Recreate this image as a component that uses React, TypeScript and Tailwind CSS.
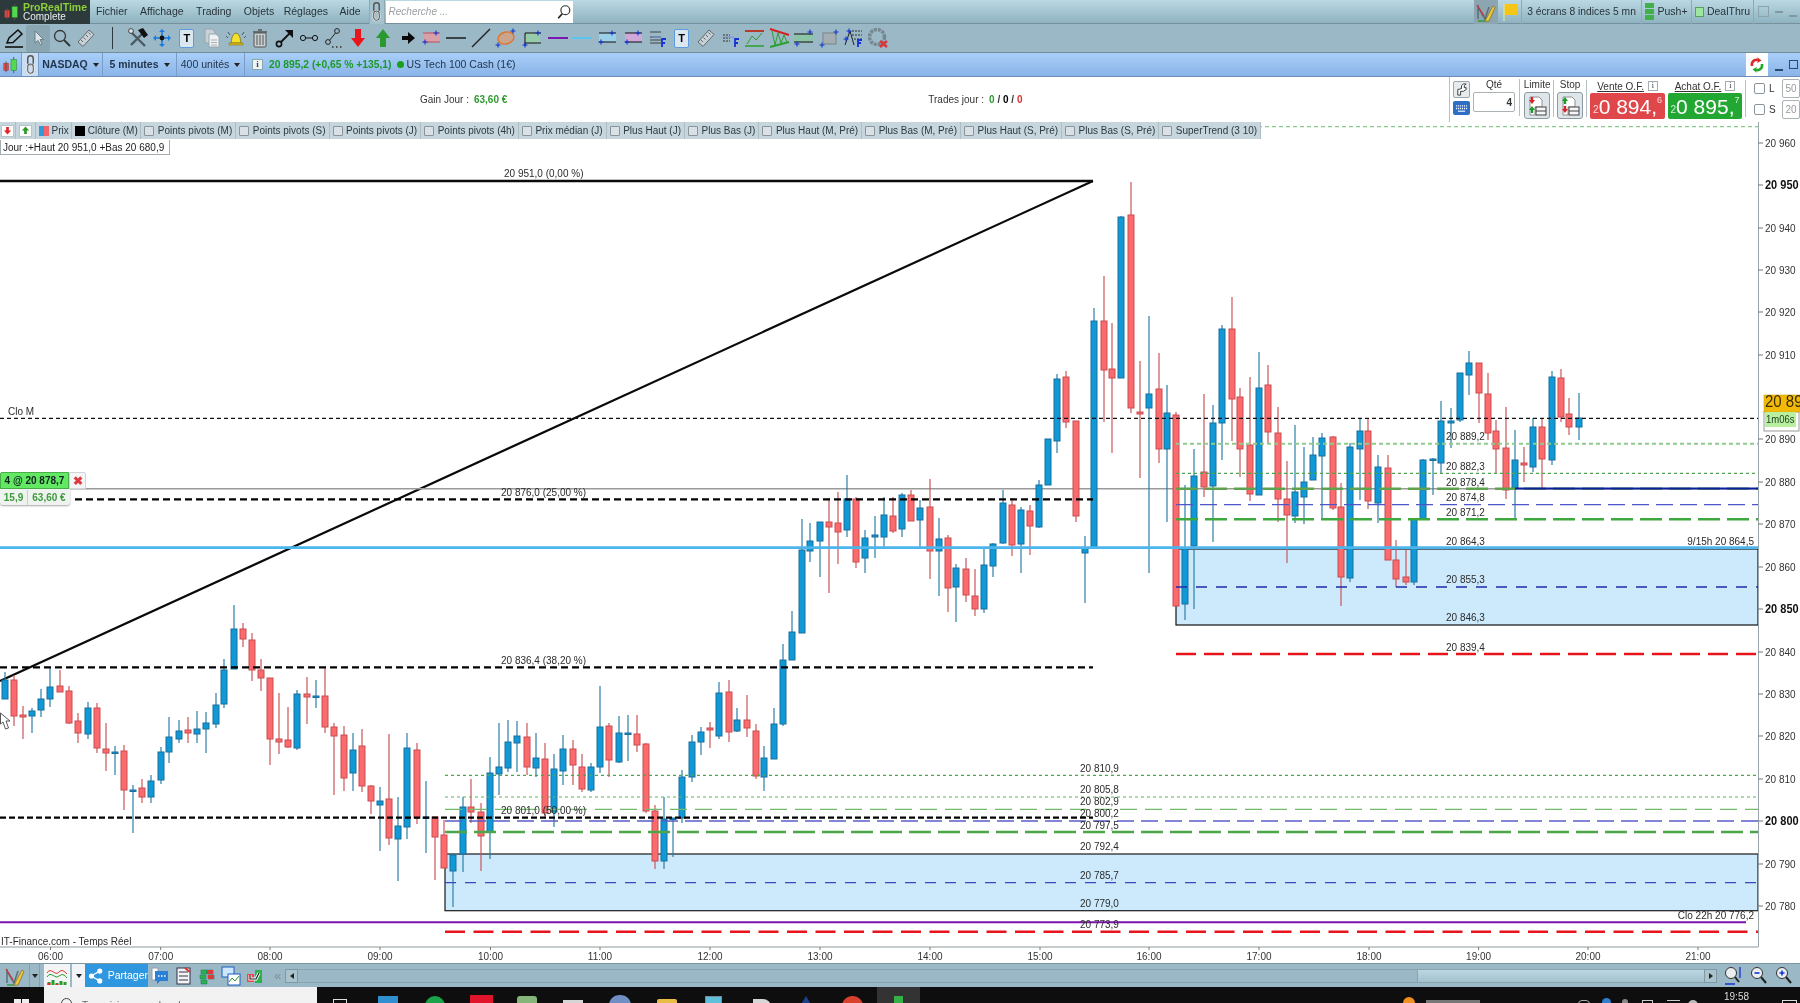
import React from "react";

type C = [number, number, number, number, number, "b" | "r"];
const candles: C[] = [
[5,672,699,680,699,"b"],[14,675,726,680,716,"r"],[23,706,739,715,717,"r"],[32,708,733,711,716,"b"],[41,689,717,699,710,"b"],[50,667,707,687,699,"b"],[60,670,692,686,692,"r"],[69,686,724,691,723,"r"],[78,713,743,721,733,"r"],[88,702,739,708,734,"b"],[97,703,753,708,748,"r"],[106,723,771,749,753,"r"],[115,746,775,752,753,"b"],[124,745,810,751,790,"r"],[133,785,833,790,791,"b"],[142,779,803,788,797,"r"],[151,775,803,781,797,"b"],[161,747,784,752,780,"b"],[169,717,763,737,752,"b"],[179,720,743,731,739,"b"],[188,717,743,730,733,"r"],[197,711,743,729,734,"b"],[206,712,753,723,729,"b"],[216,693,728,705,724,"b"],[224,659,708,670,704,"b"],[234,605,669,629,669,"b"],[243,623,647,629,639,"r"],[252,633,681,640,670,"r"],[261,659,691,670,678,"r"],[270,678,765,678,739,"r"],[279,693,754,739,742,"r"],[288,707,748,740,747,"r"],[297,690,750,694,748,"b"],[307,677,724,694,697,"r"],[316,680,708,696,697,"b"],[325,667,733,696,727,"r"],[334,723,795,727,736,"r"],[344,726,791,735,778,"r"],[353,733,791,750,773,"b"],[362,729,792,746,786,"r"],[371,785,814,786,801,"r"],[380,787,851,801,805,"b"],[389,734,845,799,838,"r"],[398,797,881,826,839,"b"],[407,733,839,748,827,"b"],[417,743,824,750,818,"r"],[426,781,853,817,818,"b"],[435,817,880,817,837,"r"],[444,820,868,835,868,"r"],[453,853,907,855,871,"b"],[463,797,872,807,854,"b"],[471,779,823,807,812,"r"],[481,803,871,812,836,"r"],[490,757,859,773,832,"b"],
[499,723,795,767,774,"b"],[508,720,772,742,768,"b"],[517,721,772,736,743,"b"],[527,723,775,737,767,"r"],[536,733,777,758,768,"b"],[545,743,817,759,813,"r"],[554,754,827,769,812,"b"],[563,735,785,749,771,"b"],[573,740,785,749,765,"r"],[582,754,792,767,789,"r"],[591,763,792,767,790,"b"],[600,686,773,727,767,"b"],[609,723,777,726,760,"r"],[619,716,763,733,762,"b"],[628,715,761,733,734,"b"],[637,715,752,734,745,"r"],[646,743,813,744,811,"r"],[655,805,869,811,861,"r"],[664,797,869,819,861,"b"],[673,818,857,818,819,"b"],[682,770,823,777,818,"b"],[692,735,782,742,777,"b"],[701,727,755,732,742,"b"],[710,722,748,728,730,"r"],[719,682,739,693,736,"b"],[729,680,742,692,732,"r"],[737,708,732,720,731,"b"],[747,695,737,720,728,"r"],[756,724,779,731,776,"r"],[764,746,791,758,777,"b"],[774,708,759,724,759,"b"],[783,644,726,660,724,"b"],[792,611,660,632,660,"b"],
[802,519,633,550,633,"b"],[810,523,562,541,551,"b"],[820,522,577,522,541,"b"],[829,498,593,522,527,"r"],[838,492,564,523,532,"r"],[847,475,537,499,530,"b"],[856,497,568,499,562,"r"],[865,530,573,538,558,"b"],[875,516,558,535,537,"b"],[884,497,547,515,537,"b"],[893,497,533,516,531,"r"],[902,493,537,495,529,"b"],[911,490,521,495,521,"r"],[920,500,549,508,520,"b"],[930,479,579,507,551,"r"],[939,518,596,539,551,"b"],[948,535,612,538,588,"r"],[956,564,622,568,587,"b"],[966,558,602,569,595,"r"],[975,569,616,596,609,"r"],[984,547,613,565,609,"b"],[993,543,577,544,566,"b"],[1003,490,544,503,543,"b"],[1012,498,556,505,545,"r"],[1021,507,573,510,544,"b"],[1030,505,555,511,526,"r"],[1039,480,528,485,527,"b"],
[1048,439,485,439,485,"b"],[1057,374,453,379,441,"b"],[1066,371,428,377,422,"r"],[1076,421,522,421,516,"r"],[1085,536,603,548,553,"b"],[1094,308,548,321,548,"b"],[1104,276,422,321,370,"r"],[1112,323,453,369,378,"r"],[1121,216,378,217,378,"b"],[1131,182,413,215,408,"r"],[1140,361,478,412,414,"r"],[1149,316,573,394,408,"b"],[1159,353,463,389,449,"r"],[1167,385,522,413,449,"b"],[1176,412,606,415,606,"r"],[1185,485,620,549,604,"b"],[1194,449,609,476,546,"b"],[1204,394,497,472,487,"r"],[1213,405,542,423,486,"b"],[1222,325,460,329,423,"b"],[1232,297,441,329,399,"r"],[1240,388,477,397,449,"r"],[1250,377,501,445,494,"r"],[1259,352,495,388,495,"b"],[1268,365,443,385,432,"r"],[1278,407,522,433,499,"r"],[1287,461,563,499,515,"r"],[1295,425,523,492,516,"b"],[1304,447,524,482,497,"b"],[1313,437,480,455,480,"b"],[1322,433,520,438,456,"b"],[1333,436,510,437,508,"r"],[1341,483,606,507,577,"r"],[1350,443,582,447,578,"b"],[1360,418,500,431,449,"b"],[1368,418,509,431,501,"r"],[1378,455,523,467,503,"b"],[1388,455,560,468,560,"r"],[1396,540,587,560,579,"r"],[1406,550,585,577,582,"r"],[1414,519,585,519,582,"b"],[1423,459,519,460,519,"b"],[1433,458,495,459,460,"b"],[1441,401,473,421,463,"b"],[1451,408,448,421,423,"b"],[1460,373,422,373,420,"b"],[1469,351,395,363,375,"b"],[1479,363,423,363,393,"r"],[1488,373,440,394,433,"r"],[1496,420,473,431,449,"r"],[1506,407,499,448,490,"r"],[1515,430,520,460,488,"b"],[1524,447,482,463,465,"r"],[1533,418,472,427,467,"b"],[1542,418,490,427,459,"r"],[1552,371,465,377,460,"b"],[1561,369,422,378,417,"r"],[1569,398,435,414,427,"r"],[1579,393,440,418,427,"b"],
];

const times: [string, number][] = [["06:00",50.5],["07:00",160.7],["08:00",270],["09:00",380],["10:00",490.5],["11:00",600],["12:00",710],["13:00",820],["14:00",930],["15:00",1040],["16:00",1149],["17:00",1259],["18:00",1369],["19:00",1478.6],["20:00",1588],["21:00",1698]];
const levels: [string, number, boolean][] = [["20 960",143,false],["20 950",185,true],["20 940",228,false],["20 930",270,false],["20 920",312,false],["20 910",355,false],["20 890",439,false],["20 880",482,false],["20 870",524,false],["20 860",567,false],["20 850",609,true],["20 840",652,false],["20 830",694,false],["20 820",736,false],["20 810",779,false],["20 800",821,true],["20 790",864,false],["20 780",906,false]];
const rightLabels: [string, number][] = [["20 889,2",436],["20 882,3",466],["20 878,4",482],["20 874,8",497],["20 871,2",512],["20 864,3",541],["20 855,3",579],["20 846,3",617],["20 839,4",647]];
const leftLabels: [string, number][] = [["20 810,9",768],["20 805,8",789],["20 802,9",801],["20 800,2",813],["20 797,5",825],["20 792,4",846],["20 785,7",875],["20 779,0",903],["20 773,9",924]];
const fibLabels: [string, number, number][] = [["20 951,0 (0,00 %)",504,173],["20 876,0 (25,00 %)",501,492],["20 836,4 (38,20 %)",501,660],["20 801,0 (50,00 %)",501,810]];
const hLines: [number, number, number, string, number, string][] = [
  [1176,1758,443.7,"#8fcc8b",2,"4 3"],[1176,1758,473.3,"#4da54d",1.2,"3 3"],[1176,1758,488.7,"#5ea24f",2.5,"22 7"],[1176,1758,504.7,"#4f55c8",1.3,"17 7"],[1176,1758,519.3,"#3fa83f",2.5,"22 7"],[1176,1758,654,"#e8141c",2.5,"20 8"],[1176,1758,587,"#1c2ca8",1.3,"11 9"],
  [445,1758,775.3,"#4da54d",1.2,"3 3"],[445,1758,797,"#5db55a",1.2,"3 3"],[445,1758,809.3,"#72bb6a",1.2,"17 8"],[445,1758,821,"#5a5ec8",1.4,"17 7"],[445,1758,832,"#4ca648",2.5,"22 7"],[445,1758,882.7,"#3a47bd",1.2,"11 9"],
  [445,1758,931.7,"#e8141c",2.5,"20 8.5"],[1258,1758,126.7,"#88c888",1.2,"4 3"],
  [75,1093,499.3,"#000",2.2,"7 4"],[0,1093,667.3,"#000",2.2,"7 4"],[0,1093,817.7,"#000",2.2,"6 3"],[0,1758,418.3,"#111",1.2,"4 3"],
];

function Lbl({ x, y, t, a, b, f, c }: { x: number; y: number; t: string; a?: "end" | "middle"; b?: boolean; f?: number; c?: string }) {
  return (
    <text transform={`translate(${x} ${y + 3.6}) scale(1 1.14)`} fontSize={f ?? 10} textAnchor={a} fontWeight={b ? 700 : 400} fill={c ?? "#2b2b2b"}>{t}</text>
  );
}

function Chart() {
  return (
    <svg viewBox="0 122 1800 841" width={1800} height={841} className="block">
      <rect x={445} y={854} width={1313} height={56.7} fill="#cdeafd" stroke="#1a1a1a" strokeWidth={1.2} />
      <rect x={1176} y={549} width={582} height={76} fill="#cdeafd" stroke="#111" strokeWidth={1.2} />
      <path d="M1093 181L0 681" stroke="#0a0a0a" strokeWidth={2.2} fill="none" />
      <path d="M0 181H1093" stroke="#0a0a0a" strokeWidth={2.4} />
      <path d="M0 488.7H1758" stroke="#9a9a9a" strokeWidth={1.5} />
      {candles.map(([x, wt, wb, bt, bb, k]) => (
        <g key={x}>
          <path d={`M${x} ${wt}V${wb}`} stroke={k === "b" ? "#2d7fa8" : "#c9565a"} strokeWidth={1.2} />
          <rect x={x - 3} y={bt} width={6} height={Math.max(bb - bt, 1.5)} fill={k === "b" ? "#0f99d6" : "#fb6b6e"} stroke={k === "b" ? "#1b6f9c" : "#c84c50"} strokeWidth={1} />
        </g>
      ))}
      <path d="M0 547.7H1758" stroke="#4cb5ec" strokeWidth={2.8} />
      {hLines.map(([x1, x2, y, c, w, d]) => (
        <path key={`${x1}-${y}`} d={`M${x1} ${y}H${x2}`} stroke={c} strokeWidth={w} strokeDasharray={d} />
      ))}
      <path d="M1515 488.5H1758" stroke="#0d1fa0" strokeWidth={2.2} />
      <path d="M0 922.3H1746" stroke="#7e12ac" strokeWidth={2} />
      <path d="M0.5 713L0.5 724L3 722L5.5 729L8.5 728L6 721L10 721Z" fill="#fff" stroke="#444" strokeWidth={0.9} />

      {fibLabels.map(([t, x, y]) => <Lbl key={t} x={x} y={y} t={t} />)}
      {rightLabels.map(([t, y]) => <Lbl key={t} x={1446} y={y} t={t} />)}
      {leftLabels.map(([t, y]) => <Lbl key={t} x={1080} y={y} t={t} />)}
      <Lbl x={1754} y={541} a="end" t="9/15h 20 864,5" />
      <Lbl x={1754} y={915} a="end" t="Clo 22h 20 776,2" />
      <Lbl x={8} y={411} t="Clo M" />
      <Lbl x={1} y={941} t="IT-Finance.com - Temps Réel" />

      <path d="M1758.5 122V947" stroke="#9aa5ab" strokeWidth={1} />
      {levels.map(([t, y, b]) => (
        <g key={t}>
          <path d={`M1758 ${y}H1763`} stroke="#777" strokeWidth={1} />
          <Lbl x={1765} y={y} t={t} b={b} f={b ? 11 : 10} c={b ? "#111" : "#333"} />
        </g>
      ))}
      <rect x={1764} y={412} width={35} height={19} fill="#fff" stroke="#999" />
      <rect x={1764} y={395} width={36} height={17} fill="#f2b90a" stroke="#c9a010" strokeWidth={0.6} />
      <rect x={1765} y={412} width={31} height={15} fill="#b8f0a0" />
      <Lbl x={1765} y={403} t="20 89" f={15} c="#3a2f00" />
      <Lbl x={1766} y={419} t="1m06s" f={9.5} c="#1f3a1f" />

      <path d="M0 947H1758" stroke="#8e979c" strokeWidth={1.2} />
      {times.map(([t, x]) => (
        <g key={t}>
          <path d={`M${x} 947V950`} stroke="#777" />
          <Lbl x={x} y={956} a="middle" t={t} c="#333" />
        </g>
      ))}
    </svg>
  );
}

function Cross({ x, y }: { x: number; y: number }) {
  return <path d={`M${x - 2.5} ${y}H${x + 2.5}M${x} ${y - 2.5}V${y + 2.5}`} stroke="#1432d8" strokeWidth={1.1} />;
}
function S({ children, w = 22 }: { children: React.ReactNode; w?: number }) {
  return <svg viewBox={`0 0 ${w} 22`} width={w} height={22} className="shrink-0">{children}</svg>;
}
function T() {
  return <div className="flex h-[19px] w-[15px] items-center justify-center rounded-[2px] border border-[#5b9be0] bg-[#dbe7ee] text-[11px] font-bold text-black">T</div>;
}
function Ruler() {
  return <S><path d="M3 15L14 3L19 7.5L8 19.5Z" fill="#c7d2d8" stroke="#666" /><path d="M6 13l2 2M8.5 10.5l2 2M11 8l2 2M13.5 5.5l2 2" stroke="#666" /></S>;
}
function Channel({ fill, a = "#111" }: { fill: string; a?: string }) {
  return <S><rect x={2} y={6} width={17} height={9} fill={fill} /><path d="M2 6H19M2 15H19" stroke={a} strokeWidth={1.2} /><Cross x={15} y={6} /><Cross x={4} y={15} /></S>;
}
function Fib({ small }: { small?: boolean }) {
  return <S><path d={small ? "M3 8H10M3 11H10M3 14H10" : "M3 5H14M3 10H14M3 13H14M3 16H14"} stroke={small ? "#333" : "#444"} strokeDasharray={small ? "2 1" : undefined} /><path d="M5 10H14" stroke="#7a8ee0" /><path d="M15 20V12H19M15 16H18" stroke="#1432d8" strokeWidth={1.8} fill="none" /></S>;
}
function Slot({ children, w = 24.5 }: { children?: React.ReactNode; w?: number }) {
  return <div className="flex shrink-0 items-center justify-center" style={{ width: w }}>{children}</div>;
}
function ChartPen() {
  return <S><path d="M3 18V4M3 6L10 18L14 6" stroke="#5d6d78" strokeWidth={1.5} fill="none" /><path d="M2 4L9 15" stroke="#c8373a" strokeWidth={1.3} /><path d="M11 18L18 5L20 6.5L14 20L10.5 20.5Z" fill="#efc93a" stroke="#7d6a20" strokeWidth={0.7} /><path d="M3 20H10" stroke="#2f9a3a" strokeWidth={1.4} /></S>;
}
function LinkIcon() {
  return <svg viewBox="0 0 12 22" width={11} height={21}><rect x={3} y={1.5} width={6} height={10} rx={3} fill="none" stroke="#555" strokeWidth={1.6} /><rect x={3} y={10.5} width={6} height={10} rx={3} fill="none" stroke="#f4f4f4" strokeWidth={2.4} /><rect x={3} y={10.5} width={6} height={10} rx={3} fill="none" stroke="#555" strokeWidth={1.2} /></svg>;
}
function CandlesIcon() {
  return <svg viewBox="0 0 20 20" width={18} height={18}><rect x={2} y={8} width={5} height={8} fill="#e84a3e" stroke="#a33" strokeWidth={0.6} /><path d="M4.5 6V18M13 1V19" stroke="#555" /><rect x={10} y={4} width={6} height={12} fill="#52d94d" stroke="#2a8a2a" strokeWidth={0.6} /></svg>;
}
function Drop() {
  return <span className="inline-block h-0 w-0 border-x-[3px] border-t-[4px] border-x-transparent border-t-[#222]" />;
}
function Check({ size = "h-[10px] w-[10px]" }: { size?: string }) {
  return <span className={`inline-block shrink-0 rounded-[1px] border border-[#8a949a] bg-[#d9e1e6] ${size}`} />;
}

function TopMenu() {
  return (
    <div className="flex h-6 items-center border-b border-[#76919e] bg-gradient-to-b from-[#bad8e2] to-[#8fb3c1] text-[10.5px] text-[#27343a]">
      <div className="flex h-6 w-[90px] shrink-0 items-center gap-[2px] bg-[#2d3a3c] pl-[3px]">
        <CandlesIcon />
        <div className="flex flex-col leading-[10px]">
          <span className="scale-y-110 text-[10.5px] font-bold text-[#8ccf3a]">ProRealTime</span>
          <span className="text-[10px] text-[#e7eef0]">Complete</span>
        </div>
      </div>
      <div className="ml-[6px] flex gap-[12.5px]">
        <span>Fichier</span><span>Affichage</span><span>Trading</span><span>Objets</span><span className="-ml-[3px]">Réglages</span><span className="-ml-[1px]">Aide</span>
      </div>
      <div className="ml-[8px] flex h-6 w-[16px] items-center justify-center border-x border-[#8ea8b4] bg-[#a5c3cf]"><LinkIcon /></div>
      <div className="ml-px flex h-[22px] w-[187px] items-center justify-between bg-white pl-[3px] pr-[1px]">
        <span className="text-[10px] italic text-[#9aa0a4]">Recherche ...</span>
        <svg viewBox="0 0 18 18" width={16} height={16}><circle cx={10.5} cy={7} r={5} fill="#fff" stroke="#333" strokeWidth={1.3} /><path d="M7 11L2.5 16" stroke="#222" strokeWidth={2} /></svg>
      </div>
      <div className="ml-auto flex h-6 items-center">
        <div className="flex h-6 w-[24px] items-center justify-center bg-[#8ba5b1]"><ChartPen /></div>
        <div className="flex h-6 w-[24px] items-center justify-center border-r border-[#8ea8b4]">
          <svg viewBox="0 0 18 20" width={18} height={20}><path d="M3 2H16V13H3Z" fill="#f5c518" /><path d="M3 2V19" stroke="#d9e2a0" strokeWidth={1.4} /></svg>
        </div>
        <div className="flex h-6 w-[120px] items-center justify-center border-r border-[#8ea8b4] text-[10.3px]">3 écrans 8 indices 5 mn</div>
        <div className="flex h-6 w-[50px] items-center justify-center gap-[3px] border-r border-[#8ea8b4] text-[10.5px]">
          <span className="flex flex-col gap-px"><span className="h-[5px] w-[9px] bg-[#41b04a]" /><span className="h-[5px] w-[9px] bg-[#41b04a]" /><span className="h-[5px] w-[9px] bg-[#41b04a]" /></span>Push+
        </div>
        <div className="flex h-6 w-[62px] items-center justify-center gap-[3px] border-r border-[#8ea8b4]">
          <span className="h-[10px] w-[9px] border border-[#5aa05a] bg-[#9fe69f]" />DealThru
        </div>
        <div className="flex h-6 w-[46px] items-center justify-end gap-[6px] pr-[3px] text-[#7f98a3]">
          <span className="h-[11px] w-[11px] border border-[#8aa2ac]" />
          <span className="h-[2px] w-[8px] bg-[#7f98a3]" />
          <span className="mt-2 h-[2px] w-[8px] bg-[#7f98a3]" />
        </div>
      </div>
    </div>
  );
}

function DrawTools() {
  return (
    <div className="flex h-[29px] items-center border-b border-[#6f8c9a] bg-[#9ab8c6] pl-px">
      <Slot><S><path d="M5 16L7 11L16 3L20 7L11 15.5Z" fill="none" stroke="#111" strokeWidth={1.5} /><path d="M3 20H21" stroke="#111" strokeWidth={1.6} /></S></Slot>
      <div className="flex h-[27px] w-[24px] items-center justify-center rounded-[2px] bg-[#8aa6b3]"><S><path d="M8 4V16L11 13.5L13.5 18L15 17L13 12.5H16.5Z" fill="#dde5ea" stroke="#6d7f89" /></S></div>
      <Slot><S><circle cx={9} cy={9} r={5.5} fill="none" stroke="#333" strokeWidth={1.3} /><path d="M13 13L19 19" stroke="#333" strokeWidth={1.8} /></S></Slot>
      <Slot><Ruler /></Slot>
      <div className="ml-[13px] mr-[13px] h-[22px] w-px bg-[#2c3a40]" />
      <Slot><S><path d="M3 4L18 19M4 18L16 6" stroke="#4a5a62" strokeWidth={2.4} /><path d="M11 3L16 1L21 8L17 11Z" fill="#111" /><circle cx={4} cy={4} r={2.4} fill="#dfe6ea" stroke="#444" /></S></Slot>
      <Slot><S><path d="M11 2L14 5H8ZM11 20L14 17H8ZM2 11L5 8V14ZM20 11L17 8V14Z" fill="#1b7ae0" /><path d="M11 4V18M4 11H18" stroke="#1b7ae0" strokeWidth={1.5} /><circle cx={11} cy={11} r={2.4} fill="#111" /></S></Slot>
      <Slot><T /></Slot>
      <Slot><S><path d="M5 2H12L15 5V16H5Z" fill="#c8d2d6" stroke="#98a4aa" /><path d="M9 7H16L19 10V20H9Z" fill="#eef2f3" stroke="#98a4aa" /><path d="M11 13H17M11 15.5H17M11 18H17" stroke="#a7b0b5" /></S></Slot>
      <Slot><S><path d="M6 16C7 13 6 8 11 6C16 8 15 13 16 16Z" fill="#f5e02a" stroke="#7a6c1a" strokeWidth={0.8} /><rect x={4} y={16} width={14} height={2} fill="#d7b81a" stroke="#7a6c1a" strokeWidth={0.5} /><path d="M3 5L5 8M19 5L17 8M1 9L3 11M21 9L19 11" stroke="#4a5a62" /></S></Slot>
      <Slot><S><rect x={5} y={6} width={12} height={14} rx={1} fill="#c8cfd2" stroke="#555" /><path d="M8 8V18M11 8V18M14 8V18" stroke="#555" /><path d="M4 5H18M9 3H13" stroke="#555" strokeWidth={1.4} /></S></Slot>
      <Slot><S><circle cx={5} cy={17} r={2.6} fill="none" stroke="#111" strokeWidth={1.6} /><path d="M7 15L17 5" stroke="#111" strokeWidth={1.8} /><path d="M11 3H19V11Z" fill="#111" /></S></Slot>
      <Slot><S><circle cx={5} cy={11} r={2.6} fill="none" stroke="#111" /><circle cx={17} cy={11} r={2.6} fill="none" stroke="#111" /><path d="M7.6 11H14.4" stroke="#111" /></S></Slot>
      <Slot><S><circle cx={5} cy={15} r={2.4} fill="none" stroke="#222" /><circle cx={14} cy={4} r={2.4} fill="none" stroke="#222" /><path d="M6.5 13.4L12.5 6" stroke="#222" /><path d="M9 20H10.5M13 20H14.5M17 20H18.5" stroke="#333" strokeWidth={1.4} /></S></Slot>
      <Slot><S><path d="M8 2H14V11H18L11 20L4 11H8Z" fill="#e8151c" /></S></Slot>
      <Slot><S><path d="M8 20H14V11H18L11 2L4 11H8Z" fill="#2a9a2f" /></S></Slot>
      <Slot><S><path d="M6 9H12V5L19 11L12 17V13H6Z" fill="#0a0a0a" /></S></Slot>
      <Slot><Channel fill="#d8a0a8" a="#c24a5a" /></Slot>
      <Slot><S><path d="M1 11H21" stroke="#111" strokeWidth={1.4} /></S></Slot>
      <Slot><S><path d="M2 20L20 2" stroke="#222" strokeWidth={1.4} /></S></Slot>
      <Slot w={26}><S><ellipse cx={11} cy={11} rx={8} ry={6} fill="#c9a58c" stroke="#e0742a" strokeWidth={1.4} transform="rotate(-15 11 11)" /><Cross x={18} y={4} /><Cross x={3} y={18} /></S></Slot>
      <Slot w={27}><S><rect x={3} y={6} width={15} height={10} fill="#96ccaa" /><path d="M3 6H19M3 6V19M3 16H19" stroke="#111" strokeWidth={1} /><Cross x={16} y={6} /><Cross x={3} y={18} /></S></Slot>
      <Slot w={24}><S><path d="M1 11H21" stroke="#7a18b0" strokeWidth={2} /></S></Slot>
      <Slot w={24}><S><path d="M1 11H21" stroke="#5cc4f0" strokeWidth={2} /></S></Slot>
      <Slot w={27}><Channel fill="#9ad0e8" /></Slot>
      <Slot w={25}><Channel fill="#cfa8d8" /></Slot>
      <Slot w={24}><Fib /></Slot>
      <Slot w={23}><T /></Slot>
      <Slot w={25}><Ruler /></Slot>
      <Slot w={25}><Fib small /></Slot>
      <Slot w={24}><S><path d="M1 4H20M1 19H20" stroke="#2ba02f" strokeWidth={1.6} /><path d="M1 4H20" stroke="#d62020" strokeWidth={1.6} /><path d="M3 17L8 9L12 13L18 6" stroke="#2ba02f" fill="none" /></S></Slot>
      <Slot w={25}><S><path d="M1 2L20 8" stroke="#d62020" strokeWidth={2} /><path d="M1 20L20 15" stroke="#2ba02f" strokeWidth={2} /><path d="M3 4L6 18L9 6L12 16L15 8L18 15" stroke="#2ba02f" fill="none" /></S></Slot>
      <Slot w={24}><S><rect x={1} y={7} width={19} height={8} fill="#8cc4a8" /><path d="M1 7H20M1 15H20" stroke="#111" /><Cross x={17} y={5} /><Cross x={4} y={17} /></S></Slot>
      <Slot w={25}><S><rect x={5} y={6} width={13} height={11} fill="#a4adb2" stroke="#7a8488" /><Cross x={18} y={5} /><Cross x={4} y={18} /></S></Slot>
      <Slot w={25}><S><path d="M2 18L7 4L11 18" stroke="#222" fill="none" /><path d="M9 4H19M9 8H19M11 12H19" stroke="#333" strokeDasharray="2 1" /><Cross x={6} y={4} /><Cross x={3} y={12} /><path d="M15 20V13H19M15 16H18" stroke="#1432d8" strokeWidth={1.8} fill="none" /></S></Slot>
      <Slot w={24}><S><circle cx={10} cy={10} r={7.5} fill="none" stroke="#77878f" strokeWidth={3.5} strokeDasharray="3 1" /><path d="M13 14L20 20M20 14L13 20" stroke="#d5383c" strokeWidth={2.6} /></S></Slot>
    </div>
  );
}

function BlueBar() {
  return (
    <div className="flex h-[24px] items-stretch border-b border-[#6e8fb5] bg-gradient-to-b from-[#a9cff9] to-[#8ab4e8] text-[10.5px] text-[#24364c]">
      <div className="flex w-[22px] items-center justify-center border-r border-[#7b9cc4]"><CandlesIcon /></div>
      <div className="flex w-[17px] items-center justify-center border-r border-[#7b9cc4] bg-[#c9ddf3]"><LinkIcon /></div>
      <div className="flex w-[64px] items-center justify-center gap-[5px] border-r border-[#7b9cc4] font-bold">NASDAQ<Drop /></div>
      <div className="flex w-[74px] items-center justify-center gap-[5px] border-r border-[#7b9cc4] font-bold">5 minutes<Drop /></div>
      <div className="flex w-[68px] items-center justify-center gap-[5px] border-r border-[#7b9cc4]">400 unités<Drop /></div>
      <div className="ml-[7px] flex items-center">
        <span className="flex h-[11px] w-[11px] items-center justify-center border border-[#8aa] bg-[#eef3f6] font-['Liberation_Serif',serif] text-[9px] font-bold leading-none text-[#445]">i</span>
        <span className="ml-[6px] text-[10.3px] font-bold text-[#1c9a28]">20 895,2 (+0,65 % +135,1)</span>
        <span className="ml-[5px] h-[7px] w-[7px] rounded-full bg-[#1aa01e]" />
        <span className="ml-[3px] text-[10.5px] text-[#24364c]">US Tech 100 Cash (1€)</span>
      </div>
      <div className="ml-auto flex items-stretch">
        <div className="flex w-[22px] items-center justify-center bg-white">
          <svg viewBox="0 0 20 20" width={18} height={18}><path d="M3 11C2 6 6 2 11 3L10 1L15 5L10 8L11 6C8 5 5 7 6 11Z" fill="#e02a2a" /><path d="M17 9C18 14 14 18 9 17L10 19L5 15L10 12L9 14C12 15 15 13 14 9Z" fill="#22a82a" /></svg>
        </div>
        <div className="flex w-[32px] items-center justify-end gap-[6px] pr-[2px]">
          <span className="mt-[10px] h-[2px] w-[8px] bg-[#2a4a70]" />
          <span className="h-[9px] w-[9px] border border-[#2a4a70]" />
        </div>
      </div>
    </div>
  );
}

function DocBtn({ up }: { up?: boolean }) {
  return (
    <div className="flex h-[27px] w-[26px] items-center justify-center rounded-[3px] border border-[#8a9aa2] bg-[#dfe6ea]">
      <svg viewBox="0 0 22 22" width={22} height={22}>
        <path d="M4 2H13L16 5V12H9V20H4Z" fill="#fff" stroke="#777" strokeWidth={0.8} />
        <rect x={10} y={12} width={10} height={8} fill="#f4f6f7" stroke="#444" /><path d="M10 16H20" stroke="#444" />
        <path d={up ? "M6 2L9 6H7.2V9H4.8V6H3Z" : "M4.8 2H7.2V5H9L6 9L3 5H4.8Z"} fill={up ? "#1d9a2c" : "#d9232a"} />
        <path d={up ? "M4.8 11H7.2V14H9L6 18L3 14H4.8Z" : "M6 11L9 15H7.2V18H4.8V15H3Z"} fill={up ? "#d9232a" : "#1d9a2c"} />
      </svg>
    </div>
  );
}

function Price({ a, b, c, bg }: { a: string; b: string; c: string; bg: string }) {
  return (
    <div className={`flex h-[26px] items-end justify-center rounded-[2px] text-white ${bg}`}>
      <span className="mb-[2px] text-[10px] opacity-80">{a}</span>
      <span className="text-[21px] leading-[24px]">{b}</span>
      <span className="mb-[12px] text-[9px] opacity-80">{c}</span>
    </div>
  );
}

function OrderRow() {
  return (
    <div className="flex h-[45px] items-center bg-white text-[10px] text-[#333]">
      <span className="ml-[420px] scale-y-110">Gain Jour :</span>
      <span className="ml-[5px] scale-y-110 font-bold text-[#2f9a2f]">63,60 €</span>
      <span className="ml-[421px] scale-y-110">Trades jour :</span>
      <span className="ml-[5px] scale-y-110 font-bold"><span className="text-[#2f9a2f]">0</span> / <span className="text-black">0</span> / <span className="text-[#d33]">0</span></span>
      <div className="ml-auto flex h-[45px] w-[351px] border-l border-[#b9c0c4] pl-[3px] pt-[2px]">
        <div className="flex w-[17px] flex-col gap-[3px] pt-[2px]">
          <div className="flex h-[17px] items-center justify-center rounded-[2px] border border-[#9aa6ac] bg-[#e6ebee]">
            <svg viewBox="0 0 14 14" width={13} height={13}><path d="M3 13L3 7L7 6L7 3L9 1L12 1L10 3L10 5L12 5V7L9 9H6V13Z" fill="#fff" stroke="#333" /></svg>
          </div>
          <div className="flex h-[14px] items-center justify-center rounded-[2px] bg-[#2f6ec4]">
            <svg viewBox="0 0 14 10" width={13} height={9}><path d="M1 2H13M1 5H13" stroke="#fff" strokeWidth={1.4} strokeDasharray="1.2 1" /><path d="M3 8H11" stroke="#fff" strokeWidth={1.2} /></svg>
          </div>
        </div>
        <div className="ml-[3px] flex w-[43px] flex-col items-center">
          <span className="leading-[12px]">Qté</span>
          <div className="mt-[1px] flex h-[20px] w-full items-center justify-end rounded-[2px] border border-[#aab2b6] pr-[2px] font-bold">4</div>
        </div>
        <div className="mx-[4px] h-[37px] w-px bg-[#b9c0c4]" />
        <div className="flex w-[26px] flex-col items-center">
          <span className="leading-[12px]">Limite</span>
          <div className="mt-[1px]"><DocBtn /></div>
        </div>
        <div className="mx-[3px] mt-px h-[37px] w-px bg-[#b9c0c4]" />
        <div className="flex w-[26px] flex-col items-center">
          <span className="leading-[12px]">Stop</span>
          <div className="mt-[1px]"><DocBtn up /></div>
        </div>
        <div className="mx-[3px] mt-px h-[37px] w-px bg-[#b9c0c4]" />
        <div className="flex w-[76px] flex-col">
          <div className="flex h-[14px] items-center justify-center gap-[4px]"><span className="underline">Vente O.F.</span><span className="flex h-[10px] w-[10px] items-center justify-center border border-[#a4adb2] font-['Liberation_Serif',serif] text-[8px] leading-none">i</span></div>
          <Price a="2" b="0 894," c="6" bg="bg-[#e0474a]" />
        </div>
        <div className="ml-[3px] flex w-[75px] flex-col">
          <div className="flex h-[14px] items-center justify-center gap-[4px]"><span className="underline">Achat O.F.</span><span className="flex h-[10px] w-[10px] items-center justify-center border border-[#a4adb2] font-['Liberation_Serif',serif] text-[8px] leading-none">i</span></div>
          <Price a="2" b="0 895," c="7" bg="bg-[#22a832]" />
        </div>
        <div className="ml-[3px] mt-px h-[37px] w-px bg-[#b9c0c4]" />
        <div className="ml-[8px] flex flex-col gap-[2px]">
          <div className="flex h-[19px] items-center gap-[4px]"><Check size="h-[11px] w-[11px] rounded-[2px] bg-white" /><span className="w-[9px]">L</span><span className="flex h-[19px] w-[18px] items-center justify-center rounded-[2px] border border-[#aab2b6] text-[#999]">50</span></div>
          <div className="flex h-[19px] items-center gap-[4px]"><Check size="h-[11px] w-[11px] rounded-[2px] bg-white" /><span className="w-[9px]">S</span><span className="flex h-[19px] w-[18px] items-center justify-center rounded-[2px] border border-[#aab2b6] text-[#999]">20</span></div>
        </div>
      </div>
    </div>
  );
}

const legend = ["Points pivots (M)", "Points pivots (S)", "Points pivots (J)", "Points pivots (4h)", "Prix médian (J)", "Plus Haut (J)", "Plus Bas (J)", "Plus Haut (M, Pré)", "Plus Bas (M, Pré)", "Plus Haut (S, Pré)", "Plus Bas (S, Pré)", "SuperTrend (3 10)"];

function Legend() {
  return (
    <div className="absolute left-0 top-0 flex h-[17px] items-stretch bg-[#c7d5dd] text-[10px] text-[#2b3a42]">
      <div className="flex w-[16px] items-center justify-center border-r border-[#aebcc4]">
        <span className="flex h-[12px] w-[13px] items-center justify-center border border-[#b8c4ca] bg-white"><svg viewBox="0 0 10 10" width={9} height={9}><path d="M3.5 1H6.5V5H9L5 9.5L1 5H3.5Z" fill="#e0242a" /></svg></span>
      </div>
      <div className="flex w-[20px] items-center justify-center border-r border-[#aebcc4]">
        <span className="flex h-[12px] w-[13px] items-center justify-center border border-[#b8c4ca] bg-white"><svg viewBox="0 0 10 10" width={9} height={9}><path d="M3.5 9H6.5V5H9L5 0.5L1 5H3.5Z" fill="#2a9a2a" /></svg></span>
      </div>
      <div className="flex items-center gap-[3px] border-r border-[#aebcc4] px-[2.5px]">
        <span className="flex h-[10px] w-[10px]"><span className="w-1/2 bg-[#2f9ad8]" /><span className="w-1/2 bg-[#f4656a]" /></span><span className="scale-y-110">Prix</span>
      </div>
      <div className="flex items-center gap-[3px] border-r border-[#aebcc4] px-[2.5px]">
        <span className="h-[10px] w-[10px] bg-black" /><span className="scale-y-110">Clôture (M)</span>
      </div>
      {legend.map((t) => (
        <div key={t} className="flex items-center gap-[3.5px] border-r border-[#aebcc4] px-[3px]">
          <Check /><span className="scale-y-110 whitespace-nowrap">{t}</span>
        </div>
      ))}
    </div>
  );
}

function OrderBadge() {
  return (
    <div className="absolute left-0 top-[350px] flex flex-col text-[10px] font-bold">
      <div className="flex h-[17px]">
        <div className="flex w-[69px] items-center justify-center rounded-tl-[2px] border border-[#49b049] bg-[#62e862] text-[#122]">4 @ 20 878,7</div>
        <div className="flex w-[17px] items-center justify-center rounded-tr-[2px] border border-[#d0d4d8] bg-[#f4f6f7] text-[12px] leading-none text-[#dc3c40]">✖</div>
      </div>
      <div className="flex h-[16px] w-[70px] items-center rounded-b-[3px] bg-[#eff3ef] text-[#3d9a3d] shadow-[0_1px_2px_rgba(0,0,0,0.35)]">
        <span className="flex w-[28px] justify-center border-r border-[#c9d0c9]">15,9</span>
        <span className="flex flex-1 justify-center">63,60 €</span>
      </div>
    </div>
  );
}

function BottomBar() {
  return (
    <div className="flex h-[24px] items-center border-t border-[#7e99a5] bg-[#9ab8c6] text-[10px]">
      <div className="flex h-full w-[29px] shrink-0 items-center justify-center"><ChartPen /></div>
      <div className="flex h-full w-[11px] shrink-0 items-center justify-center border-x border-[#84a0ac]"><Drop /></div>
      <div className="ml-[4px] flex h-full w-[26px] shrink-0 items-center justify-center bg-[#f2f4f5]">
        <S><path d="M1 8C5 1 9 12 13 7C16 4 18 6 21 9" stroke="#d33" fill="none" /><path d="M1 12C5 5 9 15 13 11C16 9 18 9 21 13" stroke="#2a9a2a" fill="none" /><path d="M3 20V17M7 20V15M11 20V18M15 20V16M19 20V17" stroke="#2a9a2a" strokeWidth={3} /><path d="M3 20V18M11 20V19" stroke="#d33" strokeWidth={3} /></S>
      </div>
      <div className="ml-[2px] flex h-full w-[13px] shrink-0 items-center justify-center bg-[#f2f4f5]"><Drop /></div>
      <div className="flex h-full w-[63px] shrink-0 items-center gap-[4px] bg-[#2f96e0] pl-[3px] text-white">
        <svg viewBox="0 0 16 16" width={16} height={16}><path d="M3 8L12 3M3 8L12 13" stroke="#fff" strokeWidth={1.3} /><circle cx={3.5} cy={8} r={2.6} fill="#fff" /><circle cx={12} cy={3} r={2.6} fill="#fff" /><circle cx={12} cy={13} r={2.6} fill="#fff" /></svg>
        <span className="scale-y-110 text-[10.5px]">Partager</span>
      </div>
      <Slot w={24}><S><rect x={3} y={3} width={6} height={12} fill="#fff" stroke="#99a" /><path d="M6 6H19V16H11L8 19V16H6Z" fill="#2a7fd8" /><path d="M9 11H10.5M12 11H13.5M15 11H16.5" stroke="#fff" strokeWidth={1.4} /></S></Slot>
      <Slot w={23}><S><rect x={4} y={3} width={13} height={16} fill="#f2f4f5" stroke="#334" /><path d="M6 7H15M6 11H15M6 15H15" stroke="#334" /><path d="M12 3L17 7" stroke="#d33" strokeWidth={2} /></S></Slot>
      <Slot w={24}><S><path d="M5 5H11V9H5ZM11 5H17V9H11ZM4 10H10V14H4ZM12 10H18V14H12ZM5 15H11V19H5Z" fill="#2bb24a" stroke="#176" strokeWidth={0.5} /><path d="M11 5H17V9H11ZM12 10H18V14H12Z" fill="#de3a3a" /></S></Slot>
      <Slot w={23}><S><rect x={2} y={2} width={12} height={10} fill="#cfe6ff" stroke="#1d5fc0" /><rect x={8} y={9} width={12} height={11} fill="#fff" stroke="#1d5fc0" /><path d="M9 17L12 13L15 16L19 11" stroke="#2a9a2a" fill="none" /></S></Slot>
      <Slot w={24}><S><rect x={4} y={9} width={7} height={8} fill="#e44" /><rect x={12} y={5} width={7} height={13} fill="#2bb24a" /><path d="M7 10L7 14L13 14L16 8" stroke="#fff" strokeWidth={3} fill="none" /><path d="M7 10L7 14L13 14L16 8" stroke="#222" strokeWidth={1.2} fill="none" /></S></Slot>
      <span className="ml-[8px] shrink-0 text-[13px] leading-none text-[#7f8f97]">«</span>
      <div className="ml-[4px] flex h-[14px] w-[13px] shrink-0 items-center justify-center border border-[#7f98a3] bg-[#a9c4cf]"><span className="h-0 w-0 border-y-[3px] border-r-[4px] border-y-transparent border-r-[#222]" /></div>
      <div className="h-[14px] min-w-0 flex-1 border-y border-[#8aa3ae] bg-[#9ab8c6]">
        <div className="ml-[1119px] h-full w-[291px] border-l border-[#8aa3ae] bg-gradient-to-b from-[#bcd7e2] to-[#a2c1ce]" />
      </div>
      <div className="flex h-[14px] w-[13px] shrink-0 items-center justify-center border border-[#7f98a3] bg-[#a9c4cf]"><span className="h-0 w-0 border-y-[3px] border-l-[4px] border-y-transparent border-l-[#222]" /></div>
      <div className="ml-[3px] flex shrink-0 items-center pr-[4px]">
        <Slot w={26}><S><circle cx={9} cy={8} r={5.5} fill="#e9eef0" stroke="#333" /><path d="M13 12L17 17" stroke="#222" strokeWidth={2} /><path d="M18 2V13M3 19H13" stroke="#1432d8" strokeWidth={1.3} /></S></Slot>
        <Slot w={25}><S><circle cx={9} cy={8} r={5.5} fill="#e9eef0" stroke="#333" /><path d="M13 12L18 18" stroke="#222" strokeWidth={2} /><path d="M6.5 8H11.5" stroke="#1432d8" strokeWidth={1.6} /></S></Slot>
        <Slot w={25}><S><circle cx={9} cy={8} r={5.5} fill="#e9eef0" stroke="#333" /><path d="M13 12L18 18" stroke="#222" strokeWidth={2} /><path d="M6.5 8H11.5M9 5.5V10.5" stroke="#1432d8" strokeWidth={1.6} /></S></Slot>
      </div>
    </div>
  );
}

function Taskbar() {
  return (
    <div className="flex h-4 items-start overflow-hidden bg-[#0e0e0e] text-[10px] text-[#e8e8e8]">
      <div className="ml-[14px] mt-[12px] grid h-[15px] w-[15px] shrink-0 grid-cols-2 gap-px">
        <span className="bg-[#eee]" /><span className="bg-[#eee]" />
      </div>
      <div className="ml-[15px] flex h-full w-[273px] shrink-0 items-start bg-[#f2f2f2] pl-[17px] pt-[11px]">
        <span className="h-[11px] w-[11px] shrink-0 rounded-full border border-[#444]" />
        <span className="ml-[10px] text-[10px] text-[#666]">Taper ici pour rechercher</span>
      </div>
      <div className="ml-[16px] mt-[12px] h-[6px] w-[14px] shrink-0 border-x border-t border-[#ddd]" />
      <div className="ml-[31px] mt-[9px] h-[10px] w-[20px] shrink-0 bg-[#2f8fd0]" />
      <div className="ml-[27px] mt-[9px] h-[20px] w-[20px] shrink-0 rounded-full bg-[#1aa34a]" />
      <div className="ml-[25px] mt-[8px] h-[10px] w-[23px] shrink-0 bg-[#e0142a]" />
      <div className="ml-[24px] mt-[9px] h-[10px] w-[20px] shrink-0 rounded-t-[3px] bg-[#86b57a]" />
      <div className="ml-[26px] mt-[13px] h-[6px] w-[20px] shrink-0 bg-[#d5d5d5]" />
      <div className="ml-[26px] mt-[8px] h-[20px] w-[22px] shrink-0 rounded-full bg-[#6f8fc4]" />
      <div className="ml-[26px] mt-[12px] h-[6px] w-[20px] shrink-0 rounded-t-[2px] bg-[#e7bd45]" />
      <div className="ml-[28px] mt-[9px] h-[10px] w-[17px] shrink-0 border border-[#7a8a92] bg-[#5fc0dc]" />
      <div className="ml-[31px] mt-[12px] h-[8px] w-[18px] shrink-0 rounded-tr-full bg-[#d6d6d6]" />
      <div className="ml-[29px] mt-[9px] h-0 w-0 shrink-0 border-x-[6px] border-b-[10px] border-x-transparent border-b-[#1d3f8c]" />
      <div className="ml-[30px] mt-[9px] h-[20px] w-[21px] shrink-0 rounded-full bg-[#d9402e]" />
      <div className="ml-[14px] flex h-full w-[43px] shrink-0 justify-center bg-[#333]">
        <span className="mt-[9px] h-[10px] w-[9px] bg-[#35b14a]" />
      </div>
      <div className="ml-[483px] mt-[10px] h-[8px] w-[12px] shrink-0 rounded-t-full bg-[#f09020]" />
      <div className="ml-[11px] mt-[13px] h-[3px] w-[54px] shrink-0 bg-[#777]" />
      <div className="ml-[98px] mt-[13px] h-[8px] w-[12px] shrink-0 rounded-full border border-[#aaa]" />
      <div className="ml-[12px] mt-[11px] h-[8px] w-[9px] shrink-0 rounded-t-full bg-[#2f7fd0]" />
      <div className="ml-[11px] mt-[12px] h-[6px] w-[6px] shrink-0 rounded-full bg-[#888]" />
      <div className="ml-[14px] mt-[13px] h-[6px] w-[11px] shrink-0 border border-[#ccc]" />
      <div className="ml-[14px] mt-[13px] h-[6px] w-[13px] shrink-0 border-t border-[#ccc]" />
      <div className="ml-[8px] mt-[13px] h-[6px] w-[10px] shrink-0 rounded-t-full bg-[#bbb]" />
      <span className="ml-[26px] mt-[5px] shrink-0 scale-y-110 leading-none text-[#ddd]">19:58</span>
      <div className="ml-[33px] mt-[13px] h-[6px] w-[15px] shrink-0 border-x border-t border-[#ddd]" />
    </div>
  );
}

export default function App() {
  return (
    <div className="flex h-[1003px] w-[1800px] flex-col overflow-hidden bg-white font-['Liberation_Sans',sans-serif] blur-[0.35px]">
      <TopMenu />
      <DrawTools />
      <BlueBar />
      <OrderRow />
      <div className="relative h-[841px]">
        <Chart />
        <Legend />
        <div className="absolute left-0 top-[18px] flex h-[15px] w-[170px] items-center border-x border-b border-[#a4adb2] bg-white pl-[2px] text-[10px] text-[#222]"><span className="scale-y-110">Jour :+Haut 20 951,0 +Bas 20 680,9</span></div>
        <OrderBadge />
      </div>
      <BottomBar />
      <Taskbar />
    </div>
  );
}
